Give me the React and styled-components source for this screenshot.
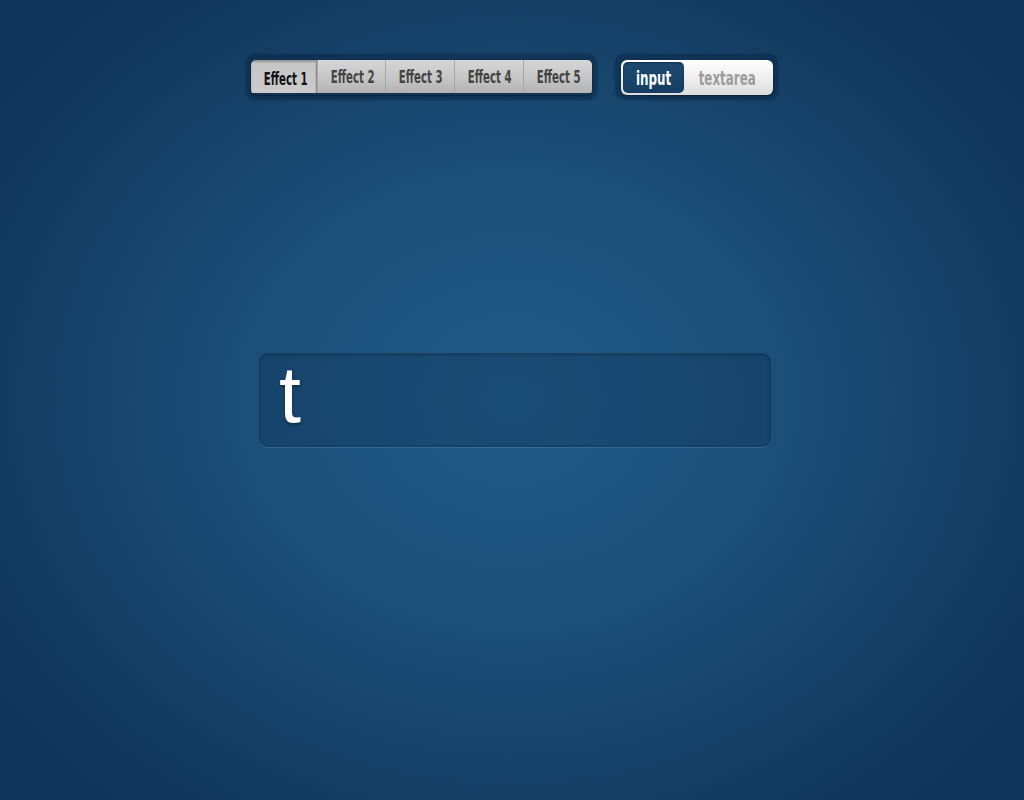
import React, { useState } from 'react';
import styled, { createGlobalStyle, css } from 'styled-components';

const GlobalStyle = createGlobalStyle`
  html, body {
    margin: 0;
    height: 100%;
  }
  body {
    background: radial-gradient(ellipse 620px 520px at 512px 400px, #205b86 0%, #1b4e78 45%, #143d63 80%, #11345a 100%);
    background-color: #11345a;
    font-family: "DejaVu Sans Condensed", "Liberation Sans", sans-serif;
  }
`;

const Page = styled.div`
  width: 1024px;
  height: 800px;
  display: flex;
  flex-direction: column;
  align-items: center;
`;

const Controls = styled.div`
  display: flex;
  gap: 18px;
  margin-top: 54px;
`;

const Frame = styled.div`
  padding: 6px 5px 5px;
  border-radius: 9px;
  background: rgba(5, 25, 50, 0.35);
  box-shadow: 0 0 3px rgba(0, 0, 0, 0.15);
  display: flex;
`;

const Tabs = styled.div`
  display: flex;
  border-radius: 5px;
  overflow: hidden;
  box-shadow: 0 1px 2px rgba(0, 0, 0, 0.4);
`;

// narrow display label: squeezed to match the condensed face in the mockup
const Label = styled.span`
  display: inline-block;
  transform: scaleX(${(p) => p.$sx || 0.63});
  white-space: nowrap;
`;

const Tab = styled.button`
  width: ${(p) => p.$w}px;
  height: 33px;
  border: none;
  border-left: 1px solid #a6a6a6;
  margin: 0;
  padding: 0;
  font-family: inherit;
  font-weight: bold;
  font-size: 18px;
  color: #444444;
  background: linear-gradient(#d6d6d6, #c4c4c4 60%, #b2b2b2);
  cursor: pointer;
  &:first-child {
    border-left: none;
  }
  ${(p) =>
    p.$active &&
    css`
      color: #121212;
      padding-top: 3px;
      background: linear-gradient(#c6c6c6, #cbcbcb);
      box-shadow: inset 0 2px 2px rgba(0, 0, 0, 0.25);
      border-right: 1px solid #8d8d8d;
    `}
`;

const ToggleFrame = styled(Frame)`
  padding: 6px 5px 5px 6px;
`;

const Toggle = styled.div`
  display: flex;
  width: 152px;
  height: 35px;
  box-sizing: border-box;
  padding: 2px;
  border-radius: 6px;
  background: linear-gradient(#ffffff, #ececec 60%, #dcdcdc);
  box-shadow: 0 1px 2px rgba(0, 0, 0, 0.4);
`;

const ToggleOption = styled.button`
  border: none;
  margin: 0;
  padding: 0;
  font-family: inherit;
  font-weight: bold;
  font-size: 20px;
  height: 31px;
  border-radius: 5px;
  cursor: pointer;
  background: transparent;
  color: #9c9c9c;
  width: ${(p) => p.$w}px;
  ${(p) =>
    p.$active &&
    css`
      color: #ffffff;
      background: linear-gradient(#1d4a72, #163e62);
      box-shadow: inset 0 1px 2px rgba(0, 0, 0, 0.4);
    `}
`;

const Field = styled.div`
  margin-top: 253px;
  margin-left: 6px;
  width: 512px;
  height: 94px;
  box-sizing: border-box;
  border-radius: 9px;
  background: rgba(10, 35, 65, 0.24);
  border: 1px solid rgba(10, 30, 55, 0.25);
  box-shadow: inset 0 1px 3px rgba(0, 0, 0, 0.25), 0 1px 0 rgba(120, 170, 210, 0.25);
  padding: 0 20px;
  display: flex;
  align-items: center;
`;

const FieldText = styled.span`
  font-family: "Liberation Sans", Arial, sans-serif;
  font-size: 79px;
  line-height: 1;
  color: #ffffff;
  text-shadow: 0 2px 3px rgba(0, 0, 0, 0.35);
  margin-top: -12px;
  margin-left: -1px;
`;

const effects = [
  { label: 'Effect 1', w: 66 },
  { label: 'Effect 2', w: 68 },
  { label: 'Effect 3', w: 69 },
  { label: 'Effect 4', w: 69 },
  { label: 'Effect 5', w: 69 },
];

export default function App() {
  const [effect, setEffect] = useState(0);
  const [mode, setMode] = useState('input');

  return (
    <>
      <GlobalStyle />
      <Page>
        <Controls>
          <Frame>
            <Tabs>
              {effects.map((e, i) => (
                <Tab key={e.label} $w={e.w} $active={i === effect} onClick={() => setEffect(i)}>
                  <Label>{e.label}</Label>
                </Tab>
              ))}
            </Tabs>
          </Frame>
          <ToggleFrame>
            <Toggle>
              <ToggleOption $w={61} $active={mode === 'input'} onClick={() => setMode('input')}>
                <Label $sx={0.66}>input</Label>
              </ToggleOption>
              <ToggleOption $w={87} $active={mode === 'textarea'} onClick={() => setMode('textarea')}>
                <Label $sx={0.66}>textarea</Label>
              </ToggleOption>
            </Toggle>
          </ToggleFrame>
        </Controls>
        <Field>
          <FieldText>t</FieldText>
        </Field>
      </Page>
    </>
  );
}
